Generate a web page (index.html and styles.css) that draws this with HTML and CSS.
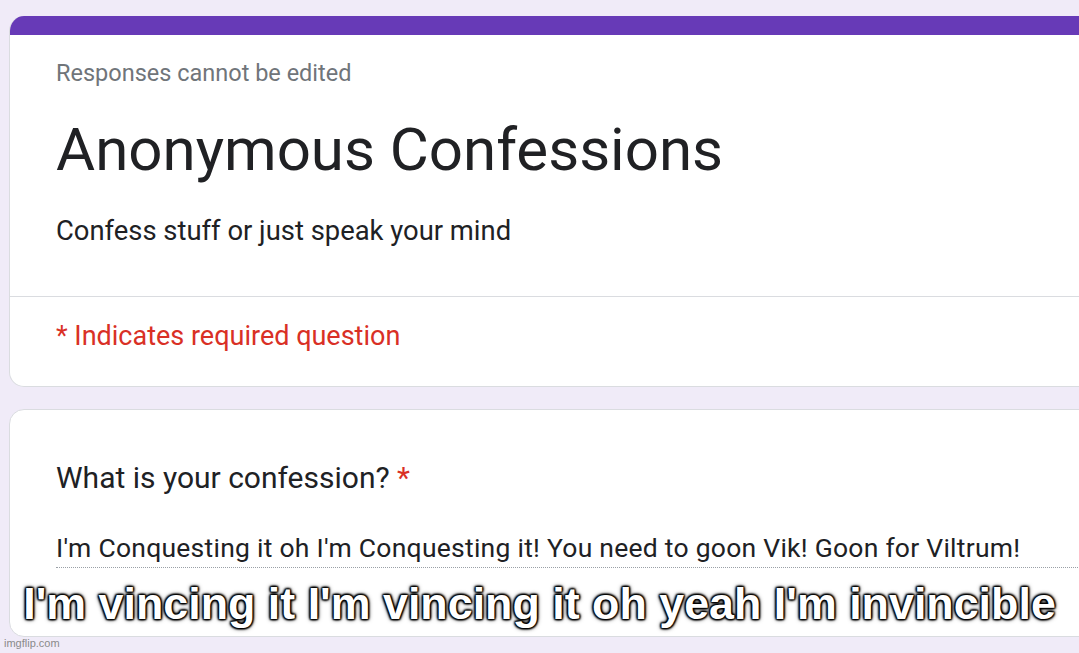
FILE: index.html
```html
<!DOCTYPE html>
<html>
<head>
<meta charset="utf-8">
<link rel="stylesheet" href="styles.css">
</head>
<body>
<div class="page">
  <div class="card header-card">
    <div class="accent"></div>
    <div class="header-top">
      <div class="note">Responses cannot be edited</div>
      <div class="title">Anonymous Confessions</div>
      <div class="desc">Confess stuff or just speak your mind</div>
    </div>
    <div class="header-bottom">
      <div class="required">* Indicates required question</div>
    </div>
  </div>
  <div class="card question-card">
    <div class="question">What is your confession? <span class="star">*</span></div>
    <div class="answer">I'm Conquesting it oh I'm Conquesting it! You need to goon Vik! Goon for Viltrum!</div>
  </div>
</div>
<div class="caption">I'm vincing it I'm vincing it oh yeah I'm invincible</div>
<div class="watermark">imgflip.com</div>
</body>
</html>
```

FILE: styles.css
```css
html, body {
  margin: 0;
  padding: 0;
  width: 1079px;
  height: 653px;
  overflow: hidden;
  background: #f0ebf8;
  font-family: Roboto, "Noto Sans", sans-serif;
}
.page {
  padding: 16px 0 0 9px;
  display: flex;
  flex-direction: column;
  gap: 22px;
}
.card {
  width: 1110px;
  background: #fff;
  border: 1px solid #dadce0;
  border-radius: 15px;
  box-sizing: border-box;
  overflow: hidden;
}
.header-card {
  height: 371px;
  border-top: none;
}
.accent {
  height: 19px;
  background: #673ab7;
}
.header-top {
  padding: 22px 0 47px 46px;
  border-bottom: 1px solid #dadce0;
}
.note {
  font-size: 23.5px;
  line-height: 32px;
  color: #70757a;
}
.title {
  margin-top: 25px;
  font-size: 60px;
  line-height: 72px;
  color: #202124;
}
.desc {
  margin-top: 27px;
  font-size: 27.4px;
  line-height: 36px;
  color: #202124;
}
.header-bottom {
  padding: 21px 0 0 46px;
}
.required {
  font-size: 27px;
  line-height: 36px;
  color: #d93025;
}
.question-card {
  height: 228px;
  padding: 49px 0 0 46px;
}
.question {
  font-size: 30px;
  line-height: 38px;
  color: #202124;
}
.star {
  color: #d93025;
}
.answer {
  margin-top: 34px;
  font-size: 26.5px;
  line-height: 34px;
  letter-spacing: 0.25px;
  color: #202124;
  padding-bottom: 2px;
  border-bottom: 1px dotted #9aa0a6;
}
.caption {
  position: absolute;
  left: 0;
  top: 576px;
  width: 1079px;
  text-align: center;
  font-family: "Liberation Sans", Arial, sans-serif;
  font-weight: bold;
  font-size: 44.8px;
  line-height: 54px;
  color: #fff;
  text-shadow: 0 0 2px #000, 0 0 2px #000, 1px 1px 2px #000, -1px -1px 2px #000, 1px -1px 2px #000, -1px 1px 2px #000, 0 0 5px #000;
}
.watermark {
  position: absolute;
  left: 4px;
  top: 637px;
  font-family: "Liberation Sans", Arial, sans-serif;
  font-size: 11px;
  color: #8a8a8a;
}
```
